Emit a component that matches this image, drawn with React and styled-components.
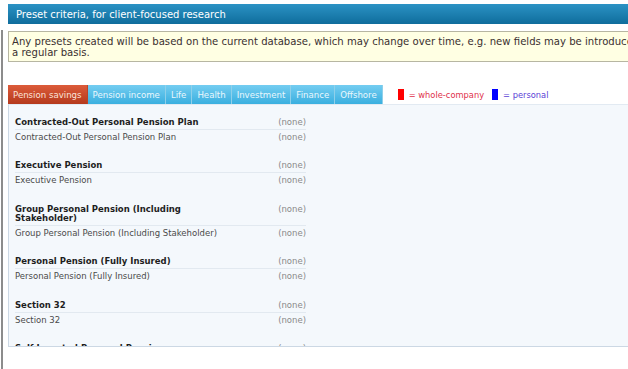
import React from "react";
import styled, { createGlobalStyle } from "styled-components";

const GlobalStyle = createGlobalStyle`
  html, body {
    margin: 0;
    padding: 0;
    background: #fff;
    overflow: hidden;
  }
  body {
    font-family: "DejaVu Sans", Verdana, sans-serif;
    font-size: 10px;
    color: #333;
  }
`;

const Page = styled.div`
  width: 662px;
  height: 369px;
  padding-top: 4px;
  box-sizing: border-box;
  display: flex;
  flex-direction: column;
`;

const TitleBar = styled.div`
  margin-left: 8px;
  height: 20px;
  padding-left: 8px;
  display: flex;
  align-items: center;
  color: #fff;
  font-size: 10px;
  background: linear-gradient(#2b92c4, #0f6d9c);
`;

const Frame = styled.div`
  flex: 1;
  margin-top: 6px;
  margin-left: 1px;
  padding-left: 5px;
  padding-top: 1px;
  border-left: 2px solid #8c8c8c;
`;

const Notice = styled.div`
  border: 1px solid #b7b6a2;
  background: #ffffe3;
  padding: 4px 3px 3px 3px;
  line-height: 11px;
  font-size: 10.1px;
  color: #3a3030;
`;

const TabBar = styled.div`
  display: flex;
  align-items: stretch;
  margin-top: 23px;
  height: 19px;
`;

const Tab = styled.div`
  display: flex;
  align-items: center;
  padding: 0 5px;
  font-size: 8.6px;
  color: ${(p) => (p.$active ? "#fbe3da" : "#e9f7fd")};
  background: ${(p) =>
    p.$active
      ? "linear-gradient(#dc5b3a, #b53a1d)"
      : "linear-gradient(#74cdf1, #3aafdf)"};
  border-right: 1px solid ${(p) => (p.$active ? "#b9442a" : "#8fd0ea")};
`;

const Legend = styled.div`
  display: flex;
  align-items: center;
  margin-left: 15px;
  font-size: 8.3px;
`;

const Swatch = styled.span`
  display: inline-block;
  width: 6px;
  height: 11px;
  margin-right: 5px;
  background: ${(p) => p.$color};
`;

const LegendText = styled.span`
  color: ${(p) => p.$color};
  margin-right: 8px;
`;

const Panel = styled.div`
  height: 243px;
  overflow: hidden;
  background: #f4f8fc;
  border: 1px solid #ccd8e4;
  border-top: 1px solid #e2eaf2;
  padding: 10px 0 0 6px;
  box-sizing: border-box;
`;

const Group = styled.div`
  width: 291px;
  margin-bottom: 13.4px;
`;

const Row = styled.div`
  display: flex;
  align-items: flex-start;
  padding: 3px 0 2px;
  line-height: 9px;
  border-bottom: 1px solid ${(p) => (p.$head ? "#e2e9f0" : "transparent")};
`;

const Label = styled.div`
  width: 215px;
  font-weight: ${(p) => (p.$head ? "bold" : "normal")};
  color: ${(p) => (p.$head ? "#1e1e1e" : "#4a4a4a")};
  font-size: 8.5px;
`;

const Value = styled.div`
  margin-left: auto;
  color: #8a8a8a;
  font-size: 8.5px;
`;

const tabs = [
  "Pension savings",
  "Pension income",
  "Life",
  "Health",
  "Investment",
  "Finance",
  "Offshore",
];

const groups = [
  "Contracted-Out Personal Pension Plan",
  "Executive Pension",
  "Group Personal Pension (Including Stakeholder)",
  "Personal Pension (Fully Insured)",
  "Section 32",
  "Self Invested Personal Pension",
];

const App = () => {
  return (
    <>
      <GlobalStyle />
      <Page>
        <TitleBar>Preset criteria, for client-focused research</TitleBar>
        <Frame>
          <Notice>
            Any presets created will be based on the current database, which
            may change over time, e.g. new fields may be introduced on a
            regular basis.
          </Notice>
          <TabBar>
            {tabs.map((t, i) => (
              <Tab key={t} $active={i === 0}>
                {t}
              </Tab>
            ))}
            <Legend>
              <Swatch $color="#ff0000" />
              <LegendText $color="#e0304a">= whole-company</LegendText>
              <Swatch $color="#0000ff" />
              <LegendText $color="#5b3fd6">= personal</LegendText>
            </Legend>
          </TabBar>
          <Panel>
            {groups.map((g) => (
              <Group key={g}>
                <Row $head>
                  <Label $head>{g}</Label>
                  <Value>(none)</Value>
                </Row>
                <Row>
                  <Label>{g}</Label>
                  <Value>(none)</Value>
                </Row>
              </Group>
            ))}
          </Panel>
        </Frame>
      </Page>
    </>
  );
};

export default App;
